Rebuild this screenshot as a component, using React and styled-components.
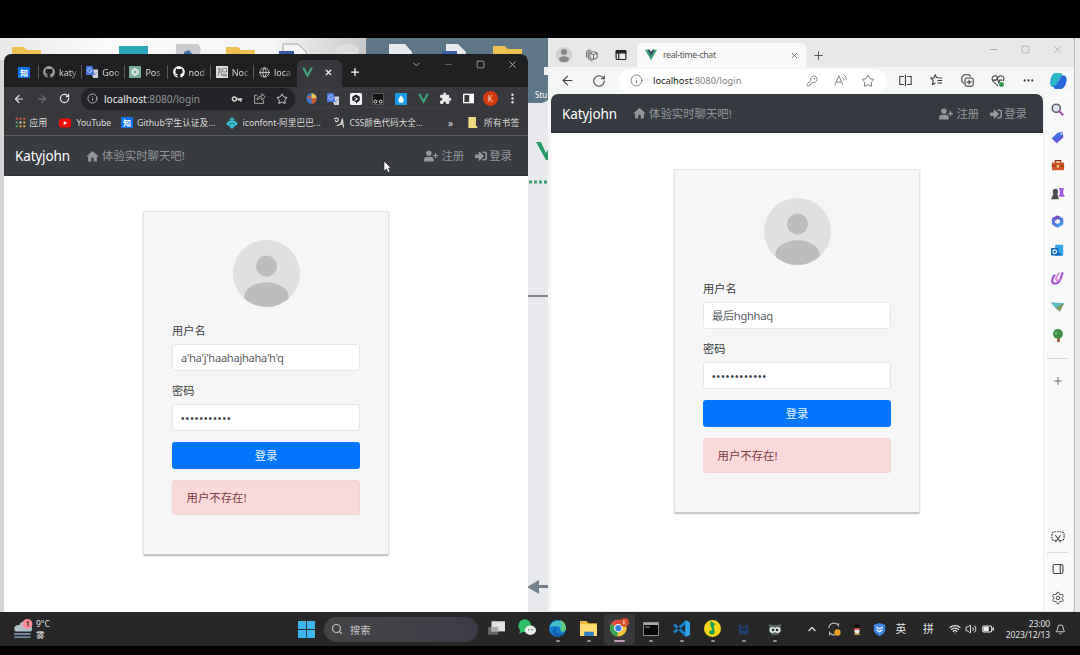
import React from "react";
import styled, { createGlobalStyle, css } from "styled-components";
import {
  ArrowLeft, ArrowRight, RotateCw, Info, Star, Plus, X, Minus, Square, ChevronDown, ChevronUp,
  EllipsisVertical, Ellipsis, Search, Settings, Wifi, Volume2, Bell, KeyRound, Globe,
} from "lucide-react";
import { FaUserPlus, FaSignInAlt, FaGithub } from "react-icons/fa";
import { MdExtension, MdHome } from "react-icons/md";

const Global = createGlobalStyle`
  * { box-sizing: border-box; }
  html, body { margin: 0; background: #000; }
  body { font-family: "Noto Sans", "Noto Sans CJK SC", sans-serif; overflow: hidden; }
  svg { display: block; flex: none; }
`;

const Screen = styled.div`
  width: 1080px; height: 655px; padding: 38px 0 9px; background: #000;
  display: flex; flex-direction: column;
`;
const Desktop = styled.main`
  position: relative; height: 574px; overflow: hidden; background: #e9eaeb;
`;
const Wallpaper = styled.svg`
  width: 1080px; height: 574px;
`;
const Window = styled.section`
  position: absolute; left: ${(p) => p.$x}px; top: ${(p) => p.$y}px;
  width: ${(p) => p.$w}px; height: ${(p) => p.$h}px;
  display: flex; flex-direction: column; overflow: hidden;
  border-radius: ${(p) => p.$r || 0}px ${(p) => p.$r || 0}px 0 0;
  background: ${(p) => p.$bg};
`;
const Bar = styled.div`
  display: flex; align-items: center; flex: none; height: ${(p) => p.$h}px;
  background: ${(p) => p.$bg || "transparent"}; color: ${(p) => p.$c || "inherit"};
  padding: ${(p) => p.$pt || 0}px 0 0 ${(p) => p.$pl || 0}px;
`;
const Slot = styled.span`
  flex: none; width: ${(p) => p.$w}px; height: 100%;
  display: flex; align-items: center; justify-content: center; color: ${(p) => p.$c || "inherit"};
`;
const Label = styled.span`
  flex: none; width: ${(p) => p.$w}px; white-space: nowrap; overflow: visible;
  font-size: ${(p) => p.$s || 9}px; line-height: 14px; letter-spacing: ${(p) => p.$ls || 0}px;
  color: ${(p) => p.$c || "inherit"};
`;
const Host = styled.span`
  color: ${(p) => p.$c};
`;
const Controls = styled.div`
  display: flex; align-items: flex-start; margin-left: auto; height: 100%;
  padding-right: ${(p) => p.$pr || 0}px;
`;

/* dark browser */
const DarkTab = styled.div`
  flex: none; width: 43.2px; height: 14px; display: flex; align-items: center; gap: 4px;
  padding-left: 4.5px; border-left: 1px solid #5b5b5b; color: #d6d6d6; font-size: 9px;
  ${(p) => p.$first && css`width: 33.5px; border-left: 0; padding-left: 14px;`}
`;
const TabText = styled.span`
  white-space: nowrap; line-height: 13px;
  mask-image: linear-gradient(90deg, #000 65%, rgba(0,0,0,.3));
`;
const ActiveDarkTab = styled.div`
  width: 45px; height: 27px; align-self: flex-end; display: flex; align-items: center;
  background: #37383b; border-radius: 6px 6px 0 0; color: #fff; padding: 0 0 3px 5px; gap: 11px;
`;
const DarkAddress = styled.div`
  flex: none; width: 214px; height: 22px; border-radius: 12px; background: #232427;
  display: flex; align-items: center;
`;
const Extensions = styled.div`
  display: flex; flex: none; width: 157px; height: 19px; margin-left: 5px; align-items: center;
  border-radius: 10px; border: 1px solid #3f4043;
`;
const Zhi = styled.span`
  width: 12px; height: 11px; background: #0f73ee; color: #fff; border-radius: 1px; flex: none;
  font: bold 8px/11px "Noto Sans CJK SC", sans-serif; text-align: center;
`;
const Profile = styled.span`
  width: 15px; height: 15px; border-radius: 50%; background: #d43a10; color: #f7ddd2;
  font-size: 8px; line-height: 15px; text-align: center;
`;
const Seam = styled.div`
  height: 1px; flex: none; background: #5b5c5f;
`;

/* light browser */
const LightTab = styled.div`
  flex: none; width: 169px; height: 24px; align-self: flex-end; background: #f9f9f9;
  border-radius: 5px 5px 0 0; display: flex; align-items: center; padding: 0 4px 0 8px; color: #555;
`;
const LightAddress = styled.div`
  flex: none; width: 268px; height: 24px; border-radius: 12px; background: #fff; margin-left: 5px;
  display: flex; align-items: center; color: #666;
`;
const Split = styled.div`
  display: flex; flex: 1; min-height: 0;
`;
const LightPage = styled.div`
  width: 492px; margin-left: 3px; background: #fff; border-radius: 7px 7px 0 0; overflow: hidden;
`;
const Side = styled.aside`
  width: 30px; display: flex; flex-direction: column; align-items: center; color: #4b4b4b;
  background: #f8f9f9; border-left: 1px solid #ededed; padding-right: 1.5px;
`;
const SideItem = styled.span`
  height: ${(p) => p.$h || 28.2}px; display: flex; align-items: center; flex: none;
`;
const SideLine = styled.span`
  width: 21px; height: 1px; background: #d7d7d7; flex: none;
`;
const Grow = styled.span`
  flex: 1;
`;

/* web page */
const Nav = styled.nav`
  display: flex; align-items: center; height: ${(p) => p.$h}px; padding: 1px 16px 0 11px; flex: none;
  background: ${(p) => p.$bg}; color: #94979b; font-size: 11.4px; border-bottom: 1px solid #2f3339;
`;
const Brand = styled.span`
  width: 70px; color: #fff; font-size: 13.5px; line-height: 20px; letter-spacing: -0.15px;
`;
const NavLink = styled.a`
  display: flex; align-items: center; gap: ${(p) => p.$gap || 3}px; margin-left: ${(p) => p.$ml || 0}px;
  white-space: nowrap; line-height: 16px;
`;
const Card = styled.form`
  width: 246px; height: 344px; margin: ${(p) => p.$mt}px 0 0 ${(p) => p.$ml}px; padding: 28px;
  background: #f6f6f6; border: 1px solid #e3e3e3; border-bottom-color: #c8c8c8; border-radius: 2px;
  box-shadow: 0 1px 1.5px rgba(0,0,0,.28);
  display: flex; flex-direction: column; font-size: 11.2px; color: #3a3d40;
`;
const Avatar = styled.svg`
  width: 67px; height: 67px; align-self: center; margin-bottom: 15px;
`;
const FieldLabel = styled.label`
  line-height: 17px; height: 22.2px;
`;
const Field = styled.div`
  height: 27px; border: 1px solid #e4e6e8; border-radius: 3px; background: #fff; padding: 0 8px;
  line-height: 25px; color: #5b6066; margin-bottom: 11px; white-space: nowrap;
  letter-spacing: ${(p) => p.$ls || 0}px;
`;
const Dots = styled.span`
  font: 10px/25px "Liberation Sans", sans-serif; letter-spacing: 1.1px; color: #3f4449;
`;
const Submit = styled.button`
  height: 27px; border: 0; border-radius: 3px; background: #0277fd; color: #eaf4ff; padding: 0; flex: none;
  font: inherit; line-height: 27px; margin-bottom: 11px;
`;
const Alert = styled.div`
  height: 35px; background: #f9d9da; border: 1px solid #f8d3d5; border-radius: 3px; padding: 0 13.5px;
  line-height: 33px; color: #7a3b42; font-size: 11.4px;
`;
const Cursor = styled.svg`
  position: absolute; left: 383px; top: 122px; width: 9px; height: 13px;
`;

/* taskbar */
const Taskbar = styled.footer`
  height: 34px; flex: none; display: flex; align-items: center; background: #272728; color: #e4e4e4;
`;
const Weather = styled.div`
  width: 291px; height: 33px; padding-left: 13px; display: flex; align-items: center; gap: 3px;
  font-size: 8.5px; line-height: 11px; flex: none;
`;
const SearchPill = styled.div`
  width: 154px; height: 25px; border-radius: 13px; background: linear-gradient(90deg, #444446, #3c3c48);
  display: flex; align-items: center; font-size: 10.3px; padding-left: 7px; gap: 7px; color: #c6c6c8;
  margin-left: 3px; flex: none;
`;
const TaskApp = styled.span`
  width: 31px; height: 31px; border-radius: 4px; flex: none; display: flex; flex-direction: column;
  align-items: center; justify-content: flex-end; gap: 2.5px; padding-bottom: 3px;
  background: ${(p) => (p.$on ? "#38383a" : "transparent")};
  &::after { content: ""; width: ${(p) => (p.$on ? 11 : 4)}px; height: 2px; border-radius: 1px;
    background: ${(p) => (p.$none ? "transparent" : p.$on ? "#c79dbb" : "#969696")}; }
`;
const Clock = styled.div`
  width: 52px; text-align: right; font-size: 8.5px; line-height: 11px; white-space: nowrap; letter-spacing: -0.1px;
`;

const Svg = ({ s = 14, w, children }) => (
  <svg width={w || s} height={s} viewBox="0 0 16 16" fill="none">{children}</svg>
);
const Vue = ({ s = 11, thin }) => (
  <Svg s={s}>
    <path d={thin ? "M0 1h3.8L8 9.500 12.200 1H16L8 15.500z" : "M0 1h6l2 3 2-3h6L8 15z"} fill="#3aa57b" />
    {!thin && <path d="M3.200 1H6l2 3.400L10 1h2.800L8 9.300z" fill="#34495e" />}
  </Svg>
);
const Translate = ({ s = 12 }) => (
  <Svg s={s}>
    <path d="M6 4.500h10V16H9.500z" fill="#cfd4dd" /><path d="M0 0h8.500l3 12H0z" fill="#4979e8" />
    <path d="M7.300 4.300a2.800 2.800 0 1 0 .5 2.200H5.500" stroke="#c9d8fb" strokeWidth="1.100" />
    <path d="M14 8c-.3 2-1.500 3.500-2.500 4.500" stroke="#7f8ca3" />
  </Svg>
);
const Gpt = () => (
  <Svg s={12}>
    <rect width="16" height="16" rx="1" fill="#75ad99" />
    <g stroke="#e7f3ee" strokeWidth="1.100"><ellipse cx="8" cy="8" rx="2.600" ry="5" /><ellipse cx="8" cy="8" rx="2.600" ry="5" transform="rotate(60 8 8)" /><ellipse cx="8" cy="8" rx="2.600" ry="5" transform="rotate(120 8 8)" /></g>
  </Svg>
);
const Doc = () => (
  <Svg s={12}><rect width="16" height="16" fill="#dedede" /><path d="M2 4h5M2 8h4M4.500 2v6L2 13M7 5v8M9 3h5v5H9zM9 11h5v2H9z" stroke="#666" strokeWidth="1" /></Svg>
);
const KeyDark = () => (
  <Svg s={12}><circle cx="4.500" cy="8" r="2.700" stroke="#d5d5d5" strokeWidth="1.900" /><path d="M7 8h8M13 8v3.500M10.500 8v2.500" stroke="#d5d5d5" strokeWidth="1.900" /></Svg>
);
const ShareIcon = () => (
  <Svg s={13}><path d="M5 4H2v10h11v-4M5 10c0-4 3-5 6-5V2l4 4-4 4V7.500C8.500 7.500 6.500 8 5 10z" stroke="#b6b6b6" strokeWidth="1.100" /></Svg>
);
const Swirl = () => (
  <Svg s={11}><circle cx="8" cy="8" r="7.500" fill="#3977d5" /><path d="M8 8V.5A7.500 7.500 0 0 1 15.500 8z" fill="#ecc245" /><path d="M8 8h7.500A7.500 7.500 0 0 1 8 15.500z" fill="#ce582e" /><path d="M2 5l5-1v4L3 9z" fill="#cb5436" /></Svg>
);
const WhiteHex = () => (
  <Svg s={12}><rect width="16" height="16" rx="2" fill="#f2f2f2" /><path d="M8 2l5 3v5l-4 3-1 2v-3l-5-2V5z" fill="#1c2026" /><path d="M6 6l4 2-4 2" stroke="#fff" strokeWidth="1.300" /></Svg>
);
const Tamper = () => (
  <Svg s={12}><rect x=".5" y=".5" width="15" height="15" rx="2" fill="#141414" stroke="#737373" /><circle cx="4.500" cy="11.500" r="2" stroke="#eee" strokeWidth="1.300" /><circle cx="11.500" cy="11.500" r="2" stroke="#eee" strokeWidth="1.300" /></Svg>
);
const BlueDrop = () => (
  <Svg s={12}><rect width="16" height="16" rx="1" fill="#189be9" /><path d="M8 3c3 4 3.500 5 3.500 6.500a3.500 3.500 0 0 1-7 0C4.500 8 5 7 8 3z" fill="#fff" /></Svg>
);
const PanelIcon = () => (
  <Svg s={11}><rect x="1" y="2" width="14" height="12" stroke="#fff" strokeWidth="2" /><path d="M9 2h6v12H9z" fill="#fff" /></Svg>
);
const appDots = ["#d65345", "#d65345", "#d65345", "#4aa36a", "#d6d6d6", "#d9a441", "#4aa36a", "#dca53e", "#dca53e"];
const AppsGrid = () => (
  <Svg s={11}>
    {appDots.map((fill, i) => (
      <rect key={i} x={1 + (i % 3) * 5.5} y={1 + Math.floor(i / 3) * 5.5} width="3" height="3" fill={fill} />
    ))}
  </Svg>
);
const YouTube = () => (
  <Svg s={12}><rect y="2" width="16" height="12" rx="3" fill="#f00c08" /><path d="M6.300 5.200v5.600L11 8z" fill="#fff" /></Svg>
);
const Iconfont = () => (
  <Svg s={12}><path d="M8 0v5M5 2l3 3 3-3" stroke="#3cc2d2" strokeWidth="1.500" /><path d="M0 9l4-4h8l4 4-5 4-3 3-3-3z" fill="#3cc2d2" /><circle cx="6" cy="9" r="1" fill="#245" /><circle cx="10" cy="9" r="1" fill="#245" /></Svg>
);
const Brush = () => (
  <Svg s={12}><path d="M1.500 3c3-3 7-1 5 2-1 2-4 1-3-1M5 11c4 1 7-3 7.500-9L14 14M9 10l5-1" stroke="#e6e6e6" strokeWidth="1.400" /></Svg>
);
const BookFolder = () => (
  <Svg s={11} w={11}><path d="M2 0h11v13h2v3H2z" fill="#f2dc83" /></Svg>
);

const LoginCard = ({ mt, ml, name, dots, ls }) => (
  <Card $mt={mt} $ml={ml}>
    <Avatar viewBox="0 0 68 68">
      <defs><clipPath id={`face${ml}`}><circle cx="34" cy="34" r="34" /></clipPath></defs>
      <circle cx="34" cy="34" r="34" fill="#e0e0e0" />
      <g clipPath={`url(#face${ml})`} fill="#bdbdbd"><circle cx="34" cy="26.500" r="10.700" /><ellipse cx="34" cy="57.500" rx="22.500" ry="14.500" /></g>
    </Avatar>
    <FieldLabel>用户名</FieldLabel>
    <Field $ls={ls}>{name}</Field>
    <FieldLabel>密码</FieldLabel>
    <Field><Dots>{"•".repeat(dots)}</Dots></Field>
    <Submit type="button">登录</Submit>
    <Alert>用户不存在!</Alert>
  </Card>
);
const SiteNav = ({ h, bg }) => (
  <Nav $h={h} $bg={bg}>
    <Brand>Katyjohn</Brand>
    <NavLink $gap={2}><MdHome size={15} />体验实时聊天吧!</NavLink>
    <Grow />
    <NavLink><FaUserPlus size={14} />注册</NavLink>
    <NavLink $ml={11} $gap={2}><FaSignInAlt size={12} />登录</NavLink>
  </Nav>
);

const darkTabs = [
  [<FaGithub size={12} color="#a5a5a5" />, "katy"],
  [<Translate />, "Goo"],
  [<Gpt />, "Pos"],
  [<FaGithub size={12} color="#fff" />, "nod"],
  [<Doc />, "Noc"],
  [<Globe size={11} color="#c9c9c9" />, "loca"],
];

const DarkBrowser = () => (
  <Window $x={4} $y={16} $w={524} $h={558} $r={7} $bg="#fff">
    <Bar $h={33} $bg="#1f2022" $pt={3}>
      <DarkTab $first><Zhi>知</Zhi></DarkTab>
      {darkTabs.map(([icon, text]) => <DarkTab key={text}>{icon}<TabText>{text}</TabText></DarkTab>)}
      <ActiveDarkTab><Vue thin s={11} /><X size={9} strokeWidth={3} /></ActiveDarkTab>
      <Slot $w={26} $c="#fff"><Plus size={12} strokeWidth={2.5} /></Slot>
      <Controls>
        {[ChevronDown, Minus, Square, X].map((I, i) => (
          <Bar key={i} $h={15} $c={i === 1 ? "#666" : "#bbb"}><Slot $w={32}><I size={i === 2 ? 9 : 11} strokeWidth={2} /></Slot></Bar>
        ))}
      </Controls>
    </Bar>
    <Bar $h={23} $bg="#37383b" $c="#e8e8e8" $pl={4}>
      <Slot $w={22}><ArrowLeft size={12} strokeWidth={2.4} /></Slot>
      <Slot $w={23} $c="#858585"><ArrowRight size={12} /></Slot>
      <Slot $w={23}><RotateCw size={11} strokeWidth={2.8} /></Slot>
      <Slot $w={5} />
      <DarkAddress>
        <Slot $w={23} $c="#b8b8b8"><Info size={11} /></Slot>
        <Label $w={122} $s={10.1} $c="#929497"><Host $c="#f2f2f2">localhost</Host>:8080/login</Label>
        <Slot $w={22}><KeyDark /></Slot>
        <Slot $w={23}><ShareIcon /></Slot>
        <Slot $w={22} $c="#d5d5d5"><Star size={12} /></Slot>
      </DarkAddress>
      <Extensions>
        <Slot $w={21}><Swirl /></Slot>
        <Slot $w={22.5}><Translate /></Slot>
        <Slot $w={22.5}><WhiteHex /></Slot>
        <Slot $w={22.5}><Tamper /></Slot>
        <Slot $w={22.5}><BlueDrop /></Slot>
        <Slot $w={22.5}><Vue thin s={11} /></Slot>
        <Slot $w={22.5}><MdExtension size={13} /></Slot>
      </Extensions>
      <Slot $w={22}><PanelIcon /></Slot>
      <Slot $w={22.5}><Profile>K</Profile></Slot>
      <Slot $w={22.5}><EllipsisVertical size={13} strokeWidth={2.6} /></Slot>
    </Bar>
    <Bar $h={25} $bg="#37383b" $c="#dedede" $pl={9}>
      <Slot $w={14}><AppsGrid /></Slot>
      <Label $w={31} $s={9}>&nbsp;应用</Label>
      <Slot $w={14}><YouTube /></Slot>
      <Label $w={45} $s={8.6}>&nbsp;&nbsp;YouTube</Label>
      <Slot $w={20}><Zhi>知</Zhi></Slot>
      <Label $w={89} $s={8.7}>Github学生认证及...</Label>
      <Slot $w={12}><Iconfont /></Slot>
      <Label $w={95} $s={8.7}>&nbsp;&nbsp;iconfont-阿里巴巴...</Label>
      <Slot $w={12}><Brush /></Slot>
      <Label $w={103} $s={8.6}>&nbsp;&nbsp;CSS颜色代码大全...</Label>
      <Label $w={13} $s={10}>»</Label>
      <Slot $w={23}><BookFolder /></Slot>
      <Label $w={38} $s={8.8}>所有书签</Label>
    </Bar>
    <Seam />
    <SiteNav h={40} bg="#383b40" />
    <LoginCard mt={35} ml={139} name="a'ha'j'haahajhaha'h'q" dots={11} ls={-0.33} />
  </Window>
);

const sideIcons = [
  <Svg s={13}><circle cx="6.500" cy="6.500" r="5" fill="#dce7ef" stroke="#66636d" strokeWidth="2" /><path d="M10 10l5 5" stroke="#a64ab3" strokeWidth="2.500" /></Svg>,
  <Svg s={13}><path d="M8 2l6-1 1 6-8 7-6-5z" fill="#426fe2" /><path d="M1 9l6 2 8-6v3l-8 7z" fill="#6950d8" /><circle cx="12.500" cy="3.500" r="1" fill="#fff" /></Svg>,
  <Svg s={14}><path d="M5 5V3h6v2" stroke="#8c3613" strokeWidth="1.500" /><rect x="1" y="5" width="14" height="9" rx="1" fill="#cf5726" /><path d="M1 9h14" stroke="#812d12" /><rect x="6.500" y="8" width="3" height="3" fill="#f1bd78" /></Svg>,
  <Svg s={14}><path d="M9 1h6l-1 3v4l2 3H9l1-3V4z" fill="#a35be0" /><circle cx="5" cy="5" r="3" fill="#4c4b50" /><path d="M3 7h4l2 7H0z" fill="#4c4b50" /></Svg>,
  <Svg s={13}><path d="M8 2.500l5 3v5l-5 3-5-3v-5z" stroke="#5877dd" strokeWidth="4" strokeLinejoin="round" /><path d="M1.500 4L8 .5l3 1.500-6 5z" fill="#7a4bc4" /><path d="M15 7v4.500L8 15.500l-3-2z" fill="#3c9fe5" /></Svg>,
  <Svg s={13}><rect x="5" y="1" width="10" height="13" rx="1" fill="#35a5e6" /><path d="M5 8l10 6H5z" fill="#1565b4" /><rect x="0" y="5" width="9" height="9" rx="1" fill="#0f69bb" /><circle cx="4.500" cy="9.500" r="2.300" stroke="#fff" strokeWidth="1.400" /></Svg>,
  <Svg s={14}><path d="M4 5C1 8 0 14 4 14.500c5 .5 7-4 9-12" stroke="#a65bd6" strokeWidth="2.600" strokeLinecap="round" /><path d="M9 2c0 3-4 4-3 8 1 2 4 1 5-2" stroke="#d986db" strokeWidth="2" /></Svg>,
  <Svg s={13}><path d="M0 3l16 1-5 10-5-4z" fill="#4797a3" /><path d="M0 3l16 1-10 6z" fill="#5cbecb" /><path d="M6 10l10-6-5 10z" fill="#8a9a55" /></Svg>,
  <Svg s={14}><path d="M7 10h3v6H7z" fill="#9a5a30" /><path d="M8 1c4 0 7 4 5 8-1 4-9 4-10 0C1 5 4 1 8 1z" fill="#3c8f44" /><circle cx="6" cy="6" r="1.500" fill="#6ac05d" /></Svg>,
];

const LightBrowser = () => (
  <Window $x={548} $y={1} $w={526} $h={572} $bg="#f5f6f6">
    <Bar $h={28} $bg="#e8e8e8" $c="#444" $pt={4}>
      <Slot $w={31}><Svg s={16}><circle cx="8" cy="8" r="8" fill="#d0cfce" /><circle cx="8" cy="5" r="3" fill="#888" /><path d="M3 13c0-5 10-5 10 0-2 3-8 3-10 0z" fill="#888" /></Svg></Slot>
      <Slot $w={25}><Svg s={13}><g stroke="#666" strokeWidth="1.200"><path d="M6 5l4.500-2L15 5v6l-4.500 2L6 11zM6 5l4.500 2L15 5M10.500 7v6M4 12V4l4-2.500M2 10.500V3L6 .8M4 12l5 3" /></g></Svg></Slot>
      <Slot $w={33}><Svg s={12}><rect x="1.500" y="2" width="13" height="12" rx="1.500" stroke="#222" strokeWidth="1.600" /><path d="M1 2h14v4H1z" fill="#222" /><path d="M5 5v9" stroke="#222" strokeWidth="1.600" /></Svg></Slot>
      <LightTab><Vue s={12} /><Slot $w={6} /><Label $w={127} $s={8.7} $ls={-0.3}>real-time-chat</Label><X size={9} /></LightTab>
      <Slot $w={24}><Plus size={13} strokeWidth={1.7} /></Slot>
      <Controls $pr={1}>
        {[Minus, Square, X].map((I, i) => <Bar key={i} $h={13} $c="#999"><Slot $w={32}><I size={i === 1 ? 9 : 11} strokeWidth={1.6} /></Slot></Bar>)}
      </Controls>
    </Bar>
    <Bar $h={27} $c="#3f3f3f" $pl={4}>
      <Slot $w={31}><ArrowLeft size={15} strokeWidth={1.7} /></Slot>
      <Slot $w={31}><RotateCw size={14} strokeWidth={1.8} /></Slot>
      <LightAddress>
        <Slot $w={34}><Info size={13} strokeWidth={1.5} /></Slot>
        <Label $w={145} $s={9.3} $c="#818181"><Host $c="#222">localhost</Host>:8080/login</Label>
        <Slot $w={28}><KeyRound size={12} strokeWidth={1.5} /></Slot>
        <Slot $w={28}><Svg s={13}><path d="M1 14L6 2l5 12M3 10h6M10 4c2 1 2 2 2 4M12 1c3 2 3 4 3 6" stroke="#777" strokeWidth="1.100" /></Svg></Slot>
        <Slot $w={28}><Star size={14} strokeWidth={1.5} /></Slot>
      </LightAddress>
      <Slot $w={4} />
      <Slot $w={28}><Svg s={13}><path d="M6 3H1v10h5M10 3h5v10h-5M8 1v14" stroke="#3c3c3c" strokeWidth="1.300" /></Svg></Slot>
      <Slot $w={34}><Svg s={13}><path d="M10 5L8 4 6.500 1 5 5H1l3 3-1 5 4-2M10 5h5M9 8h6M9 11h6" stroke="#3c3c3c" strokeWidth="1.300" /></Svg></Slot>
      <Slot $w={29}><Svg s={13}><rect x="5" y="5" width="10" height="10" rx="2" stroke="#3c3c3c" strokeWidth="1.300" /><path d="M10 7v6M7 10h6M4 12L1 9V4l3-3h6l2 2" stroke="#3c3c3c" strokeWidth="1.300" /></Svg></Slot>
      <Slot $w={32}><Svg s={14}><path d="M8 14L2 8C-1 3 5 0 8 4c3-4 9-1 6 4M2 7h4l1-2 2 5 1-3h3" stroke="#3c3c3c" strokeWidth="1.200" /><circle cx="12" cy="12" r="2.800" fill="#2b9a50" /></Svg></Slot>
      <Slot $w={29}><Ellipsis size={13} strokeWidth={2.2} /></Slot>
      <Slot $w={30}><Svg s={18}><path d="M5 1h6l2 5h-4L7 13H3C-1 13 2 1 5 1z" fill="#24a7dd" /><path d="M11 3h2c5 0 2 12-2 12H5l-2-4h4z" fill="#2568dc" /><path d="M5 1h5l1 4H8l-2 7H2z" fill="#2eb9c1" /></Svg></Slot>
    </Bar>
    <Split>
      <LightPage>
        <SiteNav h={39} bg="#353a41" />
        <LoginCard mt={36} ml={123} name="最后hghhaq" dots={12} ls={-0.3} />
      </LightPage>
      <Side>
        <SideItem $h={1} />
        {sideIcons.map((icon, i) => <SideItem key={i}>{icon}</SideItem>)}
        <SideItem $h={9} />
        <SideLine />
        <SideItem $h={44}><Plus size={12} strokeWidth={1.6} /></SideItem>
        <Grow />
        <SideItem $h={31}><Svg s={14}><path d="M6 12H4a3 3 0 0 1-3-3V5a3 3 0 0 1 3-3h8a3 3 0 0 1 3 3v4a3 3 0 0 1-3 3h-2" stroke="#444" strokeWidth="1.400" strokeDasharray="2 1" /><path d="M5 6l6 8M11 6l-6 8" stroke="#444" strokeWidth="1.300" /></Svg></SideItem>
        <SideLine />
        <SideItem $h={31}><Svg s={12}><rect x="1.500" y="2" width="13" height="12" rx="2" stroke="#444" strokeWidth="1.500" /><path d="M11 2v12" stroke="#444" strokeWidth="1.500" /></Svg></SideItem>
        <SideItem $h={27}><Settings size={14} strokeWidth={1.7} /></SideItem>
      </Side>
    </Split>
  </Window>
);

const apps = [
  [<Svg s={18}><path d="M1 7h9v7H1z" fill="#666" /><path d="M4 2h12v9H4z" fill="#e3e3e3" /><path d="M4 7h6v4H4z" fill="#aaa" /></Svg>, { $none: true }],
  [<Svg s={18}><circle cx="6" cy="6" r="5.700" fill="#2fbe68" /><path d="M2 10l-1 3 4-2" fill="#2fbe68" /><ellipse cx="11" cy="10" rx="5" ry="4.200" fill="#e8eee9" /><circle cx="9.500" cy="9.500" r=".7" fill="#555" /><circle cx="12.500" cy="9.500" r=".7" fill="#555" /></Svg>, { $none: true }],
  [<Svg s={17}><circle cx="8" cy="8" r="8" fill="#137acc" /><path d="M1 7C2-2 16-1 16 8c0 4-6 4-5 1 0-4-7-4-10-2z" fill="#43bfc9" /><path d="M10 0c4 1 6 4 6 8-1 3-5 3-5 1 2-3 1-6-1-9z" fill="#65cc73" /><path d="M6 9c0 4 4 5 8 4-3 4-9 3-10-1-1-3 2-5 4-5z" fill="#105aa8" /></Svg>, {}],
  [<Svg s={17}><path d="M0 1h6l2 2h8v12H0z" fill="#f0b93a" /><path d="M0 4h16v11H0z" fill="#ffdc72" /><path d="M4 11h9v4H4z" fill="#2d7fc5" /></Svg>, {}],
  [<Svg s={19}><g transform="translate(0 1.500) scale(.88)"><circle cx="8" cy="8" r="8" fill="#f0c13a" /><path d="M8 8L1 4a8 8 0 0 1 14 0z" fill="#dd4b3e" /><path d="M8 8L1 4a8 8 0 0 0 6 12z" fill="#39a454" /><circle cx="8" cy="8" r="4" fill="#fff" /><circle cx="8" cy="8" r="3" fill="#397de1" /></g><circle cx="12.300" cy="3.700" r="3.700" fill="#d84b20" /><path d="M11.300 2v3.500M13.300 2l-2 1.700 2 1.700" stroke="#fbd8c7" strokeWidth=".7" /></Svg>, { $on: true }],
  [<Svg s={16}><rect x=".5" y="1.500" width="15" height="13" fill="#080808" stroke="#8b8b8b" /><path d="M1 3h14" stroke="#aaa" strokeWidth="2" /><path d="M2 6h5" stroke="#999" /></Svg>, {}],
  [<Svg s={17}><path d="M11.500 0L16 2v12l-4.500 2z" fill="#2fa4ec" /><path d="M0 5l2-1.500L12 12v4zM0 11l2 1.500L12 4V0z" fill="#1781ca" /></Svg>, {}],
  [<Svg s={17}><circle cx="8" cy="8" r="8" fill="#f6d71a" /><path d="M6 1l5 3-2 1 1 6c0 4-6 3-5 0 0-1 2-2 3-1L6 5z" fill="#139b50" /></Svg>, {}],
  [<Svg s={15}><path d="M3 3h3v2h4V3h3v10H3z" fill="#243e6d" /><path d="M5 8h6" stroke="#14233d" strokeWidth="2" /></Svg>, {}],
  [<Svg s={16}><path d="M2 3l3 1h6l3-1v7l-3 4H5l-3-4z" fill="#50635c" /><circle cx="5.500" cy="9" r="3" fill="#e0e6e2" /><circle cx="10.500" cy="9" r="3" fill="#e0e6e2" /><circle cx="6" cy="9" r="1.300" fill="#222" /><circle cx="10" cy="9" r="1.300" fill="#222" /></Svg>, {}],
];

const DesktopArt = () => (
  <Wallpaper viewBox="0 38 1080 574">
    <defs><linearGradient id="sheet"><stop offset="0" stopColor="#e9e9e9" /><stop offset=".3" stopColor="#fafafa" /><stop offset=".75" stopColor="#f5f5f5" /><stop offset="1" stopColor="#c7c8ca" /></linearGradient></defs>
    <path d="M0 38h366v574H0z" fill="url(#sheet)" />
    <path d="M366 38h182v62q-5 4-12 3H366z" fill="#5d7688" />
    <path d="M12 47h12l3 3h14v9H12zM226 47h12l3 3h14v9h-29zM493 46h12l3 3h14v9h-29z" fill="#efc052" />
    <path d="M119 46h29v12h-29z" fill="#2aa4b8" />
    <path d="M176 44h22l3 4-2 10h-23z" fill="#cacccf" /><path d="M184 52l5-2 3 4h-8z" fill="#456fae" />
    <path d="M283 44h15l8 8v5h-23z" fill="#f6f6f6" stroke="#a4a4a4" /><path d="M279 51h15v6h-15z" fill="#3859a6" />
    <path d="M389 44h16l7 8v5h-23zM446 44h12l8 8v5h-20z" fill="#e6eaed" /><path d="M442 51h15v6h-15z" fill="#3c62ac" />
    <ellipse cx="347" cy="50" rx="12" ry="6" fill="#dedede" />
    <path d="M0 60h4v552H0z" fill="#d5d5d6" />
    <path d="M528 103h20v509h-20z" fill="#e7e9ec" />
    <path d="M544 67h4v8h-4z" fill="#eee" />
    <text x="535" y="98" fontSize="8" fill="#fff">Stu</text>
    <path d="M536 142h5l5 11 3-5v12h-3z" fill="#289b69" />
    <path d="M529 182h19" stroke="#3b9f73" strokeWidth="3" strokeDasharray="3 2" />
    <path d="M528 296h20" stroke="#7e8387" strokeWidth="2" />
    <path d="M527 587l12-7v14zM538 585h10v3h-10z" fill="#75828e" />
    <path d="M1074 38v574" stroke="#bcbcbc" strokeWidth="2" />
  </Wallpaper>
);

export default function App() {
  return (
    <Screen>
      <Global />
      <Desktop>
        <DesktopArt />
        <DarkBrowser />
        <LightBrowser />
        <Cursor viewBox="0 0 9 13"><path d="M1 1v10l2.500-2 1.500 3.500 2-1L5.500 8H8z" fill="#fff" stroke="#222" strokeWidth=".6" /></Cursor>
      </Desktop>
      <Taskbar>
        <Weather>
          <Svg s={20}><path d="M2 10c-3-3 1-6 3-5 1-4 7-4 8 0 3 1 3 4 1 5z" fill="#aebfca" /><path d="M1 12h13M1 14.500h13" stroke="#72839e" strokeWidth="1.500" /><circle cx="11.500" cy="4" r="4" fill="#ff8e99" /><path d="M11 3l1-.8v4" stroke="#54262c" strokeWidth=".9" /></Svg>
          <div>9°C<br />雾</div>
        </Weather>
        <Slot $w={30}><Svg s={17}><path d="M0 0h7.600v7.600H0zM8.400 0H16v7.600H8.400zM0 8.400h7.600V16H0zM8.400 8.400H16V16H8.400z" fill="#3db5ee" /></Svg></Slot>
        <SearchPill><Search size={12} strokeWidth={2.3} />搜索</SearchPill>
        <Slot $w={2} />
        {apps.map(([icon, flags], i) => <TaskApp key={i} {...flags}>{icon}</TaskApp>)}
        <Slot $w={10} />
        <Slot $w={23}><ChevronUp size={12} strokeWidth={2.5} /></Slot>
        <Slot $w={22}><Svg s={14}><path d="M2 7a6 6 0 0 1 11-3V1M14 9A6 6 0 0 1 3 12v3" stroke="#bbb" strokeWidth="1.300" /><circle cx="12" cy="12" r="3.600" fill="#ef9a22" /></Svg></Slot>
        <Slot $w={23}><Svg s={12}><ellipse cx="8" cy="8" rx="4.500" ry="7" fill="#111" /><ellipse cx="8" cy="10.500" rx="3.500" ry="4" fill="#eee" /><path d="M3.500 7h9v2h-9z" fill="#d23b2e" /><path d="M4 15h8" stroke="#e9ab2b" strokeWidth="1.500" /></Svg></Slot>
        <Slot $w={22}><Svg s={13}><path d="M8 0l7 2v6c0 4-3 6-7 8-4-2-7-4-7-8V2z" fill="#3c87e4" /><path d="M4 5l4 2 4-2M4.500 8L8 11l3.500-3" stroke="#fff" strokeWidth="1.500" /></Svg></Slot>
        <Slot $w={22}><Label $w={11} $s={10.8}>英</Label></Slot>
        <Slot $w={33}><Label $w={11} $s={10.8}>拼</Label></Slot>
        <Slot $w={19}><Wifi size={12} strokeWidth={2.5} /></Slot>
        <Slot $w={14}><Volume2 size={12} /></Slot>
        <Slot $w={20}><Svg s={12}><rect x="1" y="4" width="12" height="8" rx="2" stroke="#eee" strokeWidth="1.400" /><path d="M2 5h7v6H2zM14 6h2v4h-2z" fill="#eee" /></Svg></Slot>
        <Clock>23:00<br />2023/12/13</Clock>
        <Slot $w={21}><Bell size={11} /></Slot>
      </Taskbar>
    </Screen>
  );
}
